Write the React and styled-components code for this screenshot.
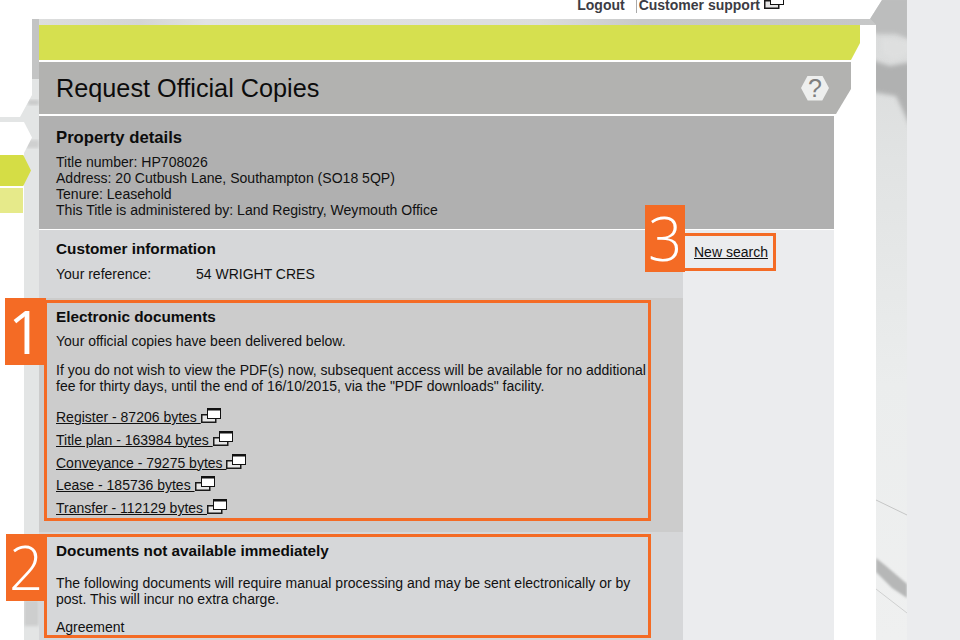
import React from 'react';
import styled, { createGlobalStyle } from 'styled-components';

const GlobalStyle = createGlobalStyle`
  html, body {
    margin: 0;
    padding: 0;
    background: #fff;
  }
`;

const orange = '#f46b25';

const Shell = styled.div`
  display: flex;
  width: 960px;
  height: 640px;
  overflow: hidden;
  background: #fff;
  color: #111;
  font-family: "Liberation Sans", Arial, sans-serif;
  font-size: 14px;
  line-height: 16px;
`;

// left rail with the cut off nav tabs
const Rail = styled.div`
  position: relative;
  flex: 0 0 39px;
  display: flex;
  flex-direction: column;
  padding-top: 122px;
  box-sizing: border-box;
`;

const RailArt = styled.svg`
  position: absolute;
  top: 0;
  left: 0;
`;

const NavTab = styled.div`
  position: relative;
  width: ${p => p.$width}px;
  height: ${p => p.$height}px;
  margin-bottom: ${p => p.$gap}px;
  background: ${p => p.$color};
  clip-path: ${p => p.$arrow
    ? 'polygon(0 0, 75% 0, 100% 50%, 75% 100%, 0 100%)'
    : 'none'};
`;

const Main = styled.div`
  flex: 0 0 837px;
  display: flex;
  flex-direction: column;
  position: relative;
`;

const TopBar = styled.div`
  display: flex;
  justify-content: flex-end;
  align-items: flex-end;
  height: 19px;
  box-sizing: border-box;
  padding: 0 92px 6px 0;
  overflow: hidden;
  font-weight: bold;
  font-size: 14px;
  color: #3c3c44;
`;

const TopLink = styled.span`
  display: inline-flex;
  align-items: flex-end;
  white-space: nowrap;
  margin-left: ${p => p.$gap || 0}px;
  padding-left: ${p => (p.$divided ? 2 : 0)}px;
  border-left: ${p => (p.$divided ? '1px solid #aaa' : 'none')};
`;

const Band = styled.div`
  height: 6px;
  background: linear-gradient(90deg, #dddede 0%, #d4d5d5 12%, #e2e3e3 20%, #dcdddd 60%, #c8c9c9 72%, #c6c7c7 100%);
`;

const GreenBar = styled.div`
  width: 821px;
  height: 35px;
  margin-bottom: 2px;
  background: #d6e04f;
  clip-path: polygon(0 0, 100% 0, 100% 18px, calc(100% - 9px) 100%, 0 100%);
`;

const TitleBar = styled.div`
  display: flex;
  align-items: center;
  justify-content: space-between;
  width: 812px;
  height: 52px;
  box-sizing: border-box;
  margin-bottom: 2px;
  padding: 0 22px 0 17px;
  background: #b2b2b0;
  clip-path: polygon(0 0, 100% 0, 100% 27px, calc(100% - 15px) 100%, 0 100%);
`;

const Title = styled.h1`
  margin: 0;
  font-size: 25.25px;
  line-height: 30px;
  font-weight: normal;
  color: #0c0c0c;
`;

const HelpBadge = styled.span`
  display: flex;
  align-items: center;
  justify-content: center;
  width: 28px;
  height: 25px;
  background: #eeefee;
  clip-path: polygon(24% 0, 76% 0, 100% 50%, 76% 100%, 24% 100%, 0 50%);
  color: #7f7f7f;
  font-size: 25px;
  font-weight: normal;
`;

const PropertyPanel = styled.section`
  width: 795px;
  height: 113px;
  box-sizing: border-box;
  margin-bottom: 1px;
  padding: 13px 17px 0;
  background: #b0b0b0;
  font-size: 14.05px;
`;

const Heading = styled.h2`
  margin: 0 0 ${p => p.$gap || 6}px;
  font-size: ${p => p.$size || 15.3}px;
  line-height: 18px;
  font-weight: bold;
  color: #0c0c0c;
`;

const Columns = styled.div`
  display: flex;
  width: 795px;
  flex: 1;
`;

const LeftColumn = styled.div`
  flex: 0 0 644px;
  min-width: 0;
  display: flex;
  flex-direction: column;
`;

const SideColumn = styled.aside`
  flex: 1;
  background: #ebecee;
  padding-top: 3px;
`;

const CustomerPanel = styled.section`
  height: 68px;
  box-sizing: border-box;
  padding: 10px 17px 0;
  background: #d6d7d9;
`;

const Reference = styled.div`
  display: flex;
`;

const ReferenceLabel = styled.span`
  width: 140px;
`;

const DocsPanel = styled.section`
  flex: ${p => (p.$fill ? 1 : '0 0 234px')};
  box-sizing: border-box;
  padding: 2px 32px 0 5px;
  background: ${p => (p.$dark ? '#cccccc' : '#d6d7d9')};
`;

const Marked = styled.div`
  position: relative;
  height: ${p => p.$height}px;
  box-sizing: border-box;
  padding: ${p => p.$top}px 0 0 9px;
  border: 3px solid ${orange};
`;

const Tag = styled.span`
  position: absolute;
  top: ${p => p.$top}px;
  left: ${p => p.$left}px;
  width: ${p => p.$width}px;
  height: 67px;
  display: flex;
  align-items: center;
  justify-content: center;
  background: ${orange};
  color: #fff;
  font-family: "Open Sans", sans-serif;
  font-weight: ${p => p.$weight || 300};
  font-size: 60px;
  line-height: 67px;
`;

const Para = styled.p`
  margin: 0 0 ${p => p.$gap || 0}px;
  color: #111;
`;

const DocList = styled.div`
  display: flex;
  flex-direction: column;
  gap: 6.75px;
`;

const DocRow = styled.div`
  display: flex;
  align-items: flex-start;
  height: 16px;
`;

const DocLink = styled.a`
  color: #111;
  text-decoration: underline;
  white-space: pre;
`;

const WindowIconSvg = styled.svg`
  flex: none;
  margin: ${p => (p.$lift ? '0 0 4px' : '-1px 0 0')};
  margin-left: ${p => p.$gap || 0}px;
`;

const SearchBox = styled.div`
  position: relative;
  width: 93px;
  height: 38px;
  box-sizing: border-box;
  padding: 8px 0 0 11px;
  border: 3px solid ${orange};
  border-left: none;
`;

const SearchLink = styled.a`
  color: #111;
  text-decoration: underline;
  white-space: nowrap;
`;

const TextureStrip = styled.div`
  position: relative;
  flex: 0 0 31px;
`;

const StripArt = styled.svg`
  position: absolute;
  top: 0;
  left: -6px;
`;

const Backdrop = styled.div`
  flex: 1;
  background: #ebecee;
`;

const WindowIcon = ({ gap, lift }) => (
  <WindowIconSvg $gap={gap} $lift={lift} width="20" height="15" viewBox="0 0 20 15">
    <rect x="0.75" y="6.75" width="14" height="7.5" fill="#e6e6e6" stroke="#1a1a1a" strokeWidth="1.5" />
    <rect x="6.5" y="0.5" width="13" height="10" fill="#fff" stroke="#111" />
    <rect x="6" y="0" width="14" height="2.5" fill="#111" />
  </WindowIconSvg>
);

const RailTexture = () => (
  <RailArt width="39" height="640" viewBox="0 0 39 640">
    <defs>
      <filter id="railBlur" colorInterpolationFilters="sRGB"><feGaussianBlur stdDeviation="1.6" /></filter>
      <clipPath id="railClip">
        <polygon points="32,19 39,19 39,640 24,640 24,122 0,122 0,117 20,117 32,95" />
      </clipPath>
    </defs>
    <g clipPath="url(#railClip)">
      <rect width="39" height="640" fill="#e3e5e5" />
      <rect x="32" y="19" width="7" height="60" fill="#c3c4c4" />
      <rect x="28" y="100" width="11" height="5" fill="#c9caca" filter="url(#railBlur)" />
      <rect x="26" y="140" width="13" height="8" fill="#cfd0d0" filter="url(#railBlur)" />
      <rect x="24" y="600" width="15" height="26" fill="#cdcece" filter="url(#railBlur)" />
    </g>
  </RailArt>
);

const StripTexture = () => (
  <StripArt width="37" height="640" viewBox="0 0 37 640">
    <defs>
      <filter id="stripBlur" x="-30%" y="-30%" width="160%" height="160%" colorInterpolationFilters="sRGB">
        <feGaussianBlur stdDeviation="2" />
      </filter>
      <filter id="streakBlur" colorInterpolationFilters="sRGB"><feGaussianBlur stdDeviation="1" /></filter>
      <linearGradient id="stripFade" x1="0" y1="0" x2="0" y2="1">
        <stop offset="0" stopColor="#d8d9d9" />
        <stop offset="0.25" stopColor="#e1e3e3" />
        <stop offset="0.6" stopColor="#ebeded" />
        <stop offset="1" stopColor="#eff0f0" />
      </linearGradient>
      <clipPath id="stripClip">
        <polygon points="12,0 37,0 37,640 6,640 6,25 0,19" />
      </clipPath>
    </defs>
    <g clipPath="url(#stripClip)">
      <rect width="37" height="640" fill="url(#stripFade)" />
      <polygon points="-4,-4 41,-4 41,40 26,34 6,34 -4,24" fill="#bcbdbd" filter="url(#stripBlur)" />
      <polygon points="12,38 41,42 41,52 24,60 12,52" fill="#dedfdf" filter="url(#stripBlur)" />
      <polygon points="2,60 20,66 41,62 41,128 26,96 2,92" fill="#b0b1b1" filter="url(#stripBlur)" />
      <polygon points="6,558 16,566 37,584 37,598 22,588 6,572" fill="#b6b7b7" filter="url(#streakBlur)" />
      <line x1="6" y1="500" x2="37" y2="515" stroke="#c5c6c6" />
      <line x1="6" y1="589" x2="37" y2="613" stroke="#cfd0d0" />
    </g>
  </StripArt>
);

const documents = [
  { label: 'Register - 87206 bytes ' },
  { label: 'Title plan - 163984 bytes ' },
  { label: 'Conveyance - 79275 bytes ' },
  { label: 'Lease - 185736 bytes ' },
  { label: 'Transfer - 112129 bytes ' },
];

const App = () => (
  <>
    <GlobalStyle />
    <Shell>
      <Rail>
        <RailTexture />
        <NavTab $width={32} $height={31} $gap={2} $color="#ffffff" $arrow />
        <NavTab $width={31} $height={31} $gap={2} $color="#d5dd45" $arrow />
        <NavTab $width={23} $height={25} $gap={0} $color="#e6ea8a" />
      </Rail>

      <Main>
        <TopBar>
          <TopLink>Logout</TopLink>
          <TopLink $gap={11} $divided>Customer support<WindowIcon gap={4} lift /></TopLink>
        </TopBar>
        <Band />
        <GreenBar />
        <TitleBar>
          <Title>Request Official Copies</Title>
          <HelpBadge>?</HelpBadge>
        </TitleBar>

        <PropertyPanel>
          <Heading $gap={7} $size={16.7}>Property details</Heading>
          <div>Title number: HP708026</div>
          <div>Address: 20 Cutbush Lane, Southampton (SO18 5QP)</div>
          <div>Tenure: Leasehold</div>
          <div>This Title is administered by: Land Registry, Weymouth Office</div>
        </PropertyPanel>

        <Columns>
          <LeftColumn>
            <CustomerPanel>
              <Heading $gap={8}>Customer information</Heading>
              <Reference>
                <ReferenceLabel>Your reference:</ReferenceLabel>
                <span>54 WRIGHT CRES</span>
              </Reference>
            </CustomerPanel>

            <DocsPanel $dark>
              <Marked $height={221} $top={5}>
                <Tag $top={-5} $left={-42} $width={41} $weight={400}>1</Tag>
                <Heading $gap={7}>Electronic documents</Heading>
                <Para $gap={13}>Your official copies have been delivered below.</Para>
                <Para $gap={15}>
                  If you do not wish to view the PDF(s) now, subsequent access will be available for no additional
                  fee for thirty days, until the end of 16/10/2015, via the "PDF downloads" facility.
                </Para>
                <DocList>
                  {documents.map(doc => (
                    <DocRow key={doc.label}>
                      <DocLink href="#">{doc.label}</DocLink>
                      <WindowIcon />
                    </DocRow>
                  ))}
                </DocList>
              </Marked>
            </DocsPanel>

            <DocsPanel $fill>
              <Marked $height={104} $top={5}>
                <Tag $top={-3} $left={-41} $width={40}>2</Tag>
                <Heading $gap={15}>Documents not available immediately</Heading>
                <Para $gap={12}>
                  The following documents will require manual processing and may be sent electronically or by
                  post. This will incur no extra charge.
                </Para>
                <div>Agreement</div>
              </Marked>
            </DocsPanel>
          </LeftColumn>

          <SideColumn>
            <SearchBox>
              <Tag $top={-31} $left={-38} $width={40}>3</Tag>
              <SearchLink href="#">New search</SearchLink>
            </SearchBox>
          </SideColumn>
        </Columns>
      </Main>

      <TextureStrip>
        <StripTexture />
      </TextureStrip>
      <Backdrop />
    </Shell>
  </>
);

export default App;
